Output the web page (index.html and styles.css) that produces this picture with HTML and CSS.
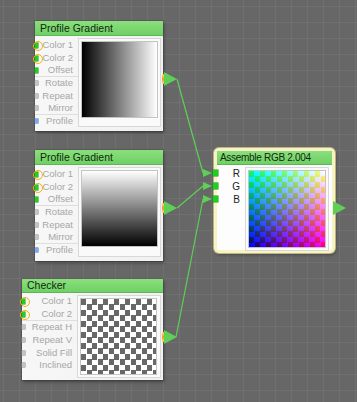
FILE: index.html
```html
<!DOCTYPE html>
<html lang="en">
<head>
    <meta charset="UTF-8">
    <meta name="viewport" content="width=device-width, initial-scale=1.0">
    <title>Node Graph</title>
    <link rel="stylesheet" href="styles.css">
</head>
<body>
<div class="canvas">

    <div class="node n1">
        <div class="head">Profile Gradient</div>
        <div class="body">
            <ul class="ports">
                <li class="c">Color 1</li>
                <li class="c">Color 2</li>
                <li class="g sep">Offset</li>
                <li class="x">Rotate</li>
                <li class="x">Repeat</li>
                <li class="x sep">Mirror</li>
                <li class="b">Profile</li>
            </ul>
            <div class="panel"><div class="preview grad-h"></div></div>
        </div>
        <span class="mark"></span>
        <span class="out"></span>
    </div>

    <div class="node n2">
        <div class="head">Profile Gradient</div>
        <div class="body">
            <ul class="ports">
                <li class="c">Color 1</li>
                <li class="c">Color 2</li>
                <li class="g sep">Offset</li>
                <li class="x">Rotate</li>
                <li class="x">Repeat</li>
                <li class="x sep">Mirror</li>
                <li class="b">Profile</li>
            </ul>
            <div class="panel"><div class="preview grad-v"></div></div>
        </div>
        <span class="mark"></span>
        <span class="out"></span>
    </div>

    <div class="node n3">
        <div class="head">Checker</div>
        <div class="body">
            <ul class="ports">
                <li class="c">Color 1</li>
                <li class="c sep">Color 2</li>
                <li class="x">Repeat H</li>
                <li class="x">Repeat V</li>
                <li class="x">Solid Fill</li>
                <li class="x">Inclined</li>
            </ul>
            <div class="panel"><div class="preview checker"></div></div>
        </div>
        <span class="mark"></span>
        <span class="out"></span>
    </div>

    <div class="node n4">
        <div class="head">Assemble RGB 2.004</div>
        <div class="body">
            <ul class="ports">
                <li class="g">R</li>
                <li class="g">G</li>
                <li class="g">B</li>
            </ul>
            <div class="panel"><div class="preview rgb"></div></div>
        </div>
        <span class="out"></span>
    </div>

    <!-- connections -->
    <svg class="wires" width="357" height="402" viewBox="0 0 357 402">
        <g stroke="#5fcf57" stroke-width="1.2" fill="none">
            <line x1="177" y1="79" x2="203" y2="173"/>
            <line x1="177" y1="208" x2="203" y2="186"/>
            <line x1="176" y1="337" x2="203" y2="199"/>
        </g>
        <g fill="#5fcf57">
            <polygon points="203,169 212,173 203,177"/>
            <polygon points="203,182 212,186 203,190"/>
            <polygon points="203,195 212,199 203,203"/>
        </g>
    </svg>

</div>
</body>
</html>
```

FILE: styles.css
```css
* {
    box-sizing: border-box;
}

body {
    margin: 0;
    width: 357px;
    height: 402px;
    overflow: hidden;
    background-color: #676767;
    font-family: 'Liberation Sans', Arial, sans-serif;
}

.canvas {
    position: relative;
    width: 357px;
    height: 402px;
    background-color: #676767;
    background-image:
        linear-gradient(rgba(255, 255, 255, 0.05) 1px, transparent 1px),
        linear-gradient(90deg, rgba(255, 255, 255, 0.05) 1px, transparent 1px);
    background-size: 16px 16px;
    background-position: 3px 6px;
}

.node {
    position: absolute;
    display: flex;
    flex-direction: column;
    background: linear-gradient(90deg, #f7f7f7, #f1f1f1);
    box-shadow: 0 0 0 1px rgba(0, 0, 0, 0.12), 1px 2px 3px rgba(0, 0, 0, 0.35);
}

.n1 { left: 35px; top: 21px; width: 128px; height: 110px; }
.n2 { left: 35px; top: 150px; width: 128px; height: 111px; }
.n3 { left: 22px; top: 279px; width: 141px; height: 101px; }

.n4 {
    left: 214px;
    top: 148px;
    width: 121px;
    height: 105px;
    border: 3px solid #f7f3c4;
    border-radius: 5px;
    background: #fdfdfd;
    box-shadow: 0 0 0 1px #bdb57c, 1px 2px 3px rgba(0, 0, 0, 0.3);
}

.head {
    flex: none;
    height: 15px;
    padding-left: 5px;
    background: linear-gradient(#8bdf7d, #6fd064);
    border-bottom: 1px solid #5fb557;
    color: #0f2a0f;
    font-size: 10.5px;
    line-height: 14px;
    white-space: nowrap;
}

.n3 .head,
.n4 .head {
    height: 14px;
    line-height: 13px;
}

.n4 .head {
    padding-left: 3px;
    font-size: 10px;
    letter-spacing: -0.3px;
}

.body {
    flex: 1;
    display: grid;
    grid-template-columns: 43px 1fr;
}

.n3 .body { grid-template-columns: 55px 1fr; }
.n4 .body { grid-template-columns: 28px 1fr; }

.ports {
    list-style: none;
    margin: 0;
    padding: 3px 0 0;
}

.n3 .ports { padding-top: 2px; }
.n4 .ports { padding-top: 2px; }

.ports li {
    position: relative;
    height: 12.7px;
    padding-right: 5px;
    color: #a6a6a6;
    font-size: 9.5px;
    line-height: 12.7px;
    text-align: right;
    white-space: nowrap;
}

.n3 .ports li { height: 12.9px; line-height: 12.9px; }

.n4 .ports li {
    height: 13px;
    line-height: 13px;
    color: #1e1e1e;
    font-size: 10px;
}

.ports li.sep {
    border-bottom: 1px solid #dedede;
}

/* port sockets */
.ports li::before {
    content: "";
    position: absolute;
    left: 0;
    top: 4px;
    width: 3px;
    height: 5px;
}

.ports li.c::before,
.ports li.g::before {
    background: #1fcf1f;
    box-shadow: 0 0 0 0.5px #129312;
}

.ports li.x::before {
    width: 3px;
    height: 4px;
    background: #c4c4c4;
    box-shadow: 0 0 0 0.5px #8a8a8a;
}

.ports li.b::before {
    width: 3px;
    height: 4px;
    background: #7fa9ee;
    box-shadow: 0 0 0 0.5px #4671c2;
}

.ports li.c::after {
    content: "";
    position: absolute;
    left: -2px;
    top: 2.3px;
    width: 8px;
    height: 8px;
    border: 1px solid #f3b400;
    border-radius: 50%;
}

.n4 .ports li::before {
    left: -4px;
    top: 3px;
    width: 5px;
    height: 6px;
}

.panel {
    margin: 2px 2px 4px 0;
    padding: 2px;
    border: 1px solid #d8d8d8;
    background: #fafafa;
}

.n3 .panel { margin-bottom: 2px; }
.n4 .panel { margin: 2px 3px 2px 0; }

.preview {
    width: 77px;
    height: 77px;
    border: 1px solid #c4c4c4;
}

.n4 .preview {
    width: 78px;
    height: 78px;
}

.grad-h {
    background: linear-gradient(90deg, #000, #fff);
}

.grad-v {
    background: linear-gradient(#fff, #000);
}

.checker {
    background: repeating-conic-gradient(#fff 0 25%, #686868 0 50%) 0 0 / 11px 11px;
}

.rgb {
    background-image:
        linear-gradient(90deg, #000, #f00),
        linear-gradient(#0f0, #000),
        repeating-conic-gradient(#0000ff 0 25%, #000070 0 50%);
    background-size: 100% 100%, 100% 100%, 11px 11px;
    background-blend-mode: screen;
}

/* output sockets */
.mark {
    position: absolute;
    right: -1px;
    top: 53px;
    width: 2px;
    height: 10px;
    border-radius: 1px;
    background: linear-gradient(#ffe07a, #f0961e, #ffe07a);
}

.out {
    position: absolute;
    right: -14px;
    top: 51px;
    width: 0;
    height: 0;
    border-left: 13px solid #5fcf57;
    border-top: 7px solid transparent;
    border-bottom: 7px solid transparent;
}

.n4 .out {
    right: -14px;
    top: 50px;
}

.wires {
    position: absolute;
    left: 0;
    top: 0;
    pointer-events: none;
}
```
